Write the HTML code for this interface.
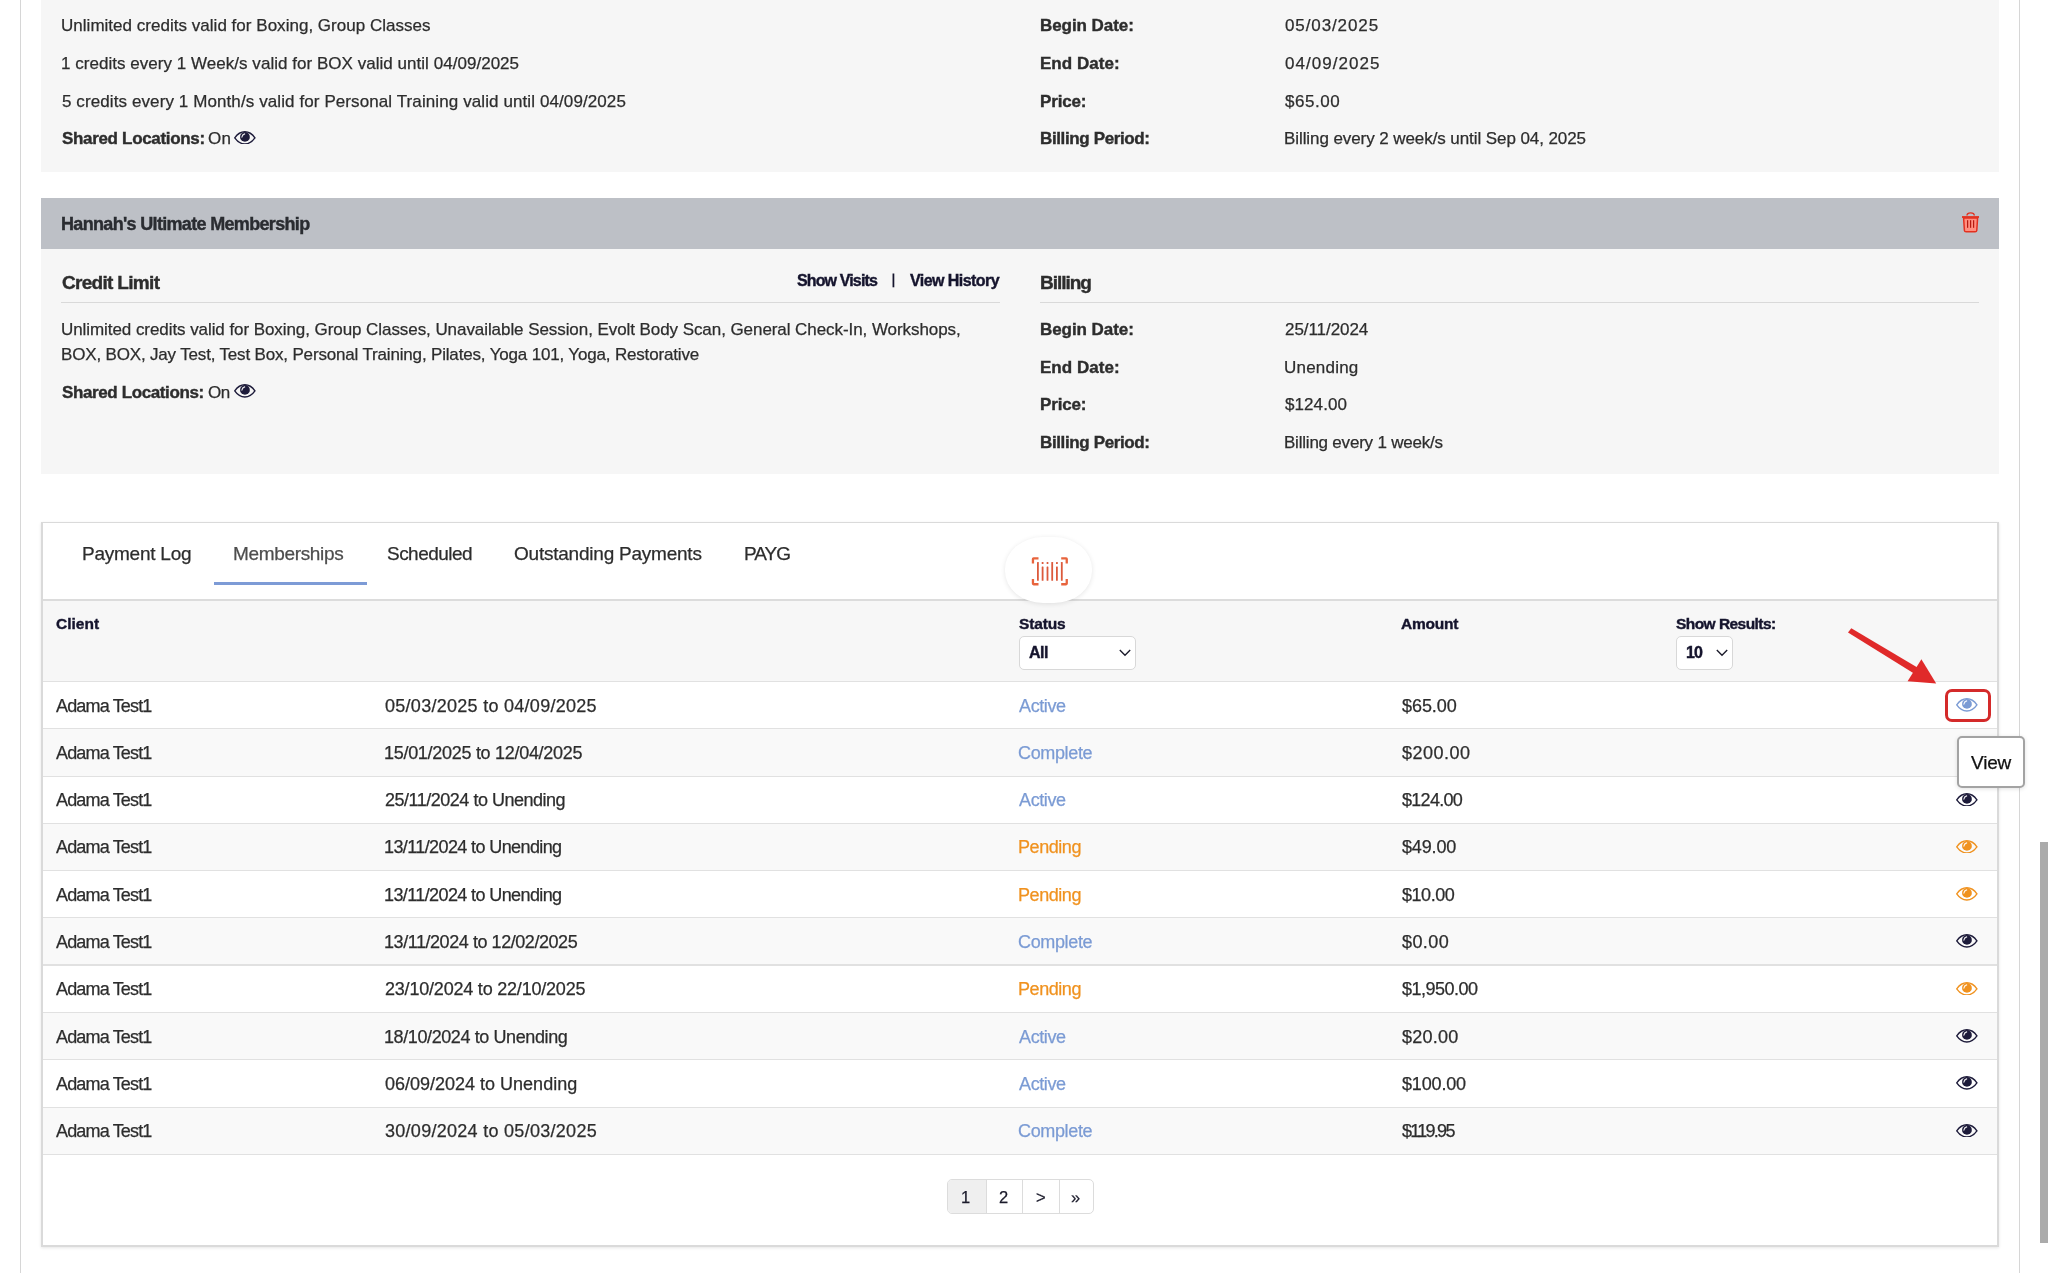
<!DOCTYPE html>
<html><head><meta charset="utf-8"><title>Memberships</title>
<style>
html,body{margin:0;padding:0;background:#fff;width:2048px;height:1273px;overflow:hidden;position:relative}
body{font-family:"Liberation Sans",sans-serif}
.ab{position:absolute;display:block}
.t{position:absolute;white-space:nowrap;font-family:"Liberation Sans",sans-serif;will-change:transform;-webkit-text-stroke:0.25px currentColor}
.b{-webkit-text-stroke:0.4px currentColor}
</style></head><body>

<div class='ab' style='left:20px;top:0;width:1px;height:1273px;background:#d6d6d6'></div>
<div class='ab' style='left:2019px;top:0;width:1px;height:1273px;background:#d6d6d6'></div>
<div class='ab' style='left:41px;top:0;width:1958px;height:172px;background:#f6f6f6'></div>
<div class='ab' style='left:41px;top:198px;width:1958px;height:51px;background:#bdc0c6'></div>
<div class='ab' style='left:41px;top:249px;width:1958px;height:225px;background:#f6f6f6'></div>
<div class='ab' style='left:61px;top:302px;width:939px;height:1.2px;background:#d9d9d9'></div>
<div class='ab' style='left:1040px;top:302px;width:939px;height:1.2px;background:#d9d9d9'></div>
<svg class='ab' style='left:891px;top:273px' width='5' height='15' viewBox='0 0 5 15'><rect x='1.55' y='0.5' width='1.75' height='13.8' fill='#15142d'/></svg>
<svg class='ab' style='left:234.2px;top:130.8px' width='21.7' height='13.7' viewBox='0 0 21.7 13.7'><path d='M0.75,6.85 C3.4,3.0 6.6,0.75 10.85,0.75 C15.1,0.75 18.3,3.0 20.95,6.85 C18.3,10.7 15.1,12.95 10.85,12.95 C6.6,12.95 3.4,10.7 0.75,6.85Z' fill='none' stroke='#1d1b3a' stroke-width='1.4'/><circle cx='10.95' cy='5.9' r='4.9' fill='#1d1b3a'/><path d='M7.9,6.1 Q8.2,3.7 10.7,2.9' fill='none' stroke='#fff' stroke-width='1.1' stroke-linecap='round' opacity='.9'/></svg>
<svg class='ab' style='left:234.2px;top:384.2px' width='21.7' height='13.7' viewBox='0 0 21.7 13.7'><path d='M0.75,6.85 C3.4,3.0 6.6,0.75 10.85,0.75 C15.1,0.75 18.3,3.0 20.95,6.85 C18.3,10.7 15.1,12.95 10.85,12.95 C6.6,12.95 3.4,10.7 0.75,6.85Z' fill='none' stroke='#1d1b3a' stroke-width='1.4'/><circle cx='10.95' cy='5.9' r='4.9' fill='#1d1b3a'/><path d='M7.9,6.1 Q8.2,3.7 10.7,2.9' fill='none' stroke='#fff' stroke-width='1.1' stroke-linecap='round' opacity='.9'/></svg>
<svg class='ab' style='left:1961px;top:211px' width='19' height='22' viewBox='0 0 19 22'>
<path d='M6,4.6 Q6,1.9 9.6,1.9 Q13.3,1.9 13.3,4.6' fill='none' stroke='#e3301f' stroke-width='1.4'/>
<rect x='1' y='5.1' width='17' height='1.8' fill='#e3301f'/>
<path d='M2.6,6.9 L3.4,19.3 Q3.6,20.8 5.1,20.8 H14.1 Q15.6,20.8 15.8,19.3 L16.6,6.9 Z' fill='#ff8f80' stroke='#e3301f' stroke-width='1.5'/>
<rect x='6' y='9.2' width='1.2' height='7.6' fill='#b51a10'/>
<rect x='9' y='9.2' width='1.2' height='7.6' fill='#b51a10'/>
<rect x='12' y='9.2' width='1.2' height='7.6' fill='#b51a10'/>
</svg>
<div class='ab' style='left:41px;top:522px;width:1958px;height:725px;box-sizing:border-box;border:2px solid #dadada;border-top-width:1.5px;background:#fff;box-shadow:0 1px 3px rgba(0,0,0,.10)'></div>
<div class='ab' style='left:214px;top:582px;width:152.5px;height:3px;background:#7d9bd6'></div>
<div class='ab' style='left:43px;top:599px;width:1954px;height:2px;background:#dcdcdc'></div>
<div class='ab' style='left:43px;top:601px;width:1954px;height:80px;background:#f7f7f7'></div>
<div class='ab' style='left:43px;top:728.6px;width:1954px;height:47.5px;background:#f9f9f9'></div>
<div class='ab' style='left:43px;top:823.1px;width:1954px;height:47.1px;background:#f9f9f9'></div>
<div class='ab' style='left:43px;top:917.5px;width:1954px;height:47.3px;background:#f9f9f9'></div>
<div class='ab' style='left:43px;top:1012.3px;width:1954px;height:47.3px;background:#f9f9f9'></div>
<div class='ab' style='left:43px;top:1107.1px;width:1954px;height:47.1px;background:#f9f9f9'></div>
<div class='ab' style='left:43px;top:680.6px;width:1954px;height:1.4px;background:#e1e1e1'></div>
<div class='ab' style='left:43px;top:728.0px;width:1954px;height:1.4px;background:#e1e1e1'></div>
<div class='ab' style='left:43px;top:775.5px;width:1954px;height:1.4px;background:#e1e1e1'></div>
<div class='ab' style='left:43px;top:822.5px;width:1954px;height:1.4px;background:#e1e1e1'></div>
<div class='ab' style='left:43px;top:869.6px;width:1954px;height:1.4px;background:#e1e1e1'></div>
<div class='ab' style='left:43px;top:916.9px;width:1954px;height:1.4px;background:#e1e1e1'></div>
<div class='ab' style='left:43px;top:964.2px;width:1954px;height:1.4px;background:#e1e1e1'></div>
<div class='ab' style='left:43px;top:1011.7px;width:1954px;height:1.4px;background:#e1e1e1'></div>
<div class='ab' style='left:43px;top:1059.0px;width:1954px;height:1.4px;background:#e1e1e1'></div>
<div class='ab' style='left:43px;top:1106.5px;width:1954px;height:1.4px;background:#e1e1e1'></div>
<div class='ab' style='left:43px;top:1153.6px;width:1954px;height:1.4px;background:#e1e1e1'></div>
<div class='ab' style='left:1005px;top:536.5px;width:87px;height:66px;border-radius:38px / 32px;background:#fff;box-shadow:0 1px 5px rgba(0,0,0,.10)'></div>
<svg class='ab' style='left:1031px;top:556px' width='38' height='31' viewBox='0 0 38 31'>
<g fill='none' stroke='#e8643d' stroke-width='2.3' stroke-linejoin='round'>
<path d='M7.5,2.35 H2.6 Q1.95,2.35 1.95,3 V7.5'/><path d='M30.2,2.35 H35.1 Q35.75,2.35 35.75,3 V7.5'/>
<path d='M1.95,23.1 V27.6 Q1.95,28.25 2.6,28.25 H7.5'/><path d='M35.75,23.1 V27.6 Q35.75,28.25 35.1,28.25 H30.2'/>
</g>
<g fill='#dc5a3c'><rect x='6.00' y='5.9' width='1.8' height='18.8' rx='0.5'/><rect x='10.70' y='10.6' width='1.8' height='14.1' rx='0.5'/><rect x='10.70' y='6.1' width='1.8' height='1.9' rx='0.5'/><rect x='15.60' y='10.6' width='1.8' height='14.1' rx='0.5'/><rect x='15.60' y='6.1' width='1.8' height='1.9' rx='0.5'/><rect x='20.30' y='5.9' width='1.8' height='18.8' rx='0.5'/><rect x='25.00' y='10.6' width='1.8' height='14.1' rx='0.5'/><rect x='25.00' y='6.1' width='1.8' height='1.9' rx='0.5'/><rect x='29.90' y='5.9' width='1.8' height='18.8' rx='0.5'/></g>
</svg>
<div class='ab' style='left:1019px;top:635.5px;width:117px;height:34px;box-sizing:border-box;border:1.3px solid #d8d8d8;border-radius:5px;background:#fff'></div>
<svg class='ab' style='left:1119px;top:649px' width='12' height='8' viewBox='0 0 12 8'><path d='M0.8,1 L6,6.2 L11.2,1' fill='none' stroke='#1a1a2a' stroke-width='1.35'/></svg>
<div class='ab' style='left:1676px;top:635.5px;width:57px;height:34px;box-sizing:border-box;border:1.3px solid #d8d8d8;border-radius:5px;background:#fff'></div>
<svg class='ab' style='left:1715.5px;top:649px' width='12' height='8' viewBox='0 0 12 8'><path d='M0.8,1 L6,6.2 L11.2,1' fill='none' stroke='#1a1a2a' stroke-width='1.35'/></svg>
<svg class='ab' style='left:1955.9px;top:697.9px' width='21.7' height='13.7' viewBox='0 0 21.7 13.7'><path d='M0.75,6.85 C3.4,3.0 6.6,0.75 10.85,0.75 C15.1,0.75 18.3,3.0 20.95,6.85 C18.3,10.7 15.1,12.95 10.85,12.95 C6.6,12.95 3.4,10.7 0.75,6.85Z' fill='none' stroke='#7b9bd4' stroke-width='1.4'/><circle cx='10.95' cy='5.9' r='4.9' fill='#7b9bd4'/><path d='M7.9,6.1 Q8.2,3.7 10.7,2.9' fill='none' stroke='#fff' stroke-width='1.1' stroke-linecap='round' opacity='.9'/></svg>
<svg class='ab' style='left:1955.9px;top:792.6px' width='21.7' height='13.7' viewBox='0 0 21.7 13.7'><path d='M0.75,6.85 C3.4,3.0 6.6,0.75 10.85,0.75 C15.1,0.75 18.3,3.0 20.95,6.85 C18.3,10.7 15.1,12.95 10.85,12.95 C6.6,12.95 3.4,10.7 0.75,6.85Z' fill='none' stroke='#1d1b3a' stroke-width='1.4'/><circle cx='10.95' cy='5.9' r='4.9' fill='#1d1b3a'/><path d='M7.9,6.1 Q8.2,3.7 10.7,2.9' fill='none' stroke='#fff' stroke-width='1.1' stroke-linecap='round' opacity='.9'/></svg>
<svg class='ab' style='left:1955.9px;top:839.7px' width='21.7' height='13.7' viewBox='0 0 21.7 13.7'><path d='M0.75,6.85 C3.4,3.0 6.6,0.75 10.85,0.75 C15.1,0.75 18.3,3.0 20.95,6.85 C18.3,10.7 15.1,12.95 10.85,12.95 C6.6,12.95 3.4,10.7 0.75,6.85Z' fill='none' stroke='#f0921f' stroke-width='1.4'/><circle cx='10.95' cy='5.9' r='4.9' fill='#f0921f'/><path d='M7.9,6.1 Q8.2,3.7 10.7,2.9' fill='none' stroke='#fff' stroke-width='1.1' stroke-linecap='round' opacity='.9'/></svg>
<svg class='ab' style='left:1955.9px;top:886.9px' width='21.7' height='13.7' viewBox='0 0 21.7 13.7'><path d='M0.75,6.85 C3.4,3.0 6.6,0.75 10.85,0.75 C15.1,0.75 18.3,3.0 20.95,6.85 C18.3,10.7 15.1,12.95 10.85,12.95 C6.6,12.95 3.4,10.7 0.75,6.85Z' fill='none' stroke='#f0921f' stroke-width='1.4'/><circle cx='10.95' cy='5.9' r='4.9' fill='#f0921f'/><path d='M7.9,6.1 Q8.2,3.7 10.7,2.9' fill='none' stroke='#fff' stroke-width='1.1' stroke-linecap='round' opacity='.9'/></svg>
<svg class='ab' style='left:1955.9px;top:934.1px' width='21.7' height='13.7' viewBox='0 0 21.7 13.7'><path d='M0.75,6.85 C3.4,3.0 6.6,0.75 10.85,0.75 C15.1,0.75 18.3,3.0 20.95,6.85 C18.3,10.7 15.1,12.95 10.85,12.95 C6.6,12.95 3.4,10.7 0.75,6.85Z' fill='none' stroke='#1d1b3a' stroke-width='1.4'/><circle cx='10.95' cy='5.9' r='4.9' fill='#1d1b3a'/><path d='M7.9,6.1 Q8.2,3.7 10.7,2.9' fill='none' stroke='#fff' stroke-width='1.1' stroke-linecap='round' opacity='.9'/></svg>
<svg class='ab' style='left:1955.9px;top:981.5px' width='21.7' height='13.7' viewBox='0 0 21.7 13.7'><path d='M0.75,6.85 C3.4,3.0 6.6,0.75 10.85,0.75 C15.1,0.75 18.3,3.0 20.95,6.85 C18.3,10.7 15.1,12.95 10.85,12.95 C6.6,12.95 3.4,10.7 0.75,6.85Z' fill='none' stroke='#f0921f' stroke-width='1.4'/><circle cx='10.95' cy='5.9' r='4.9' fill='#f0921f'/><path d='M7.9,6.1 Q8.2,3.7 10.7,2.9' fill='none' stroke='#fff' stroke-width='1.1' stroke-linecap='round' opacity='.9'/></svg>
<svg class='ab' style='left:1955.9px;top:1028.9px' width='21.7' height='13.7' viewBox='0 0 21.7 13.7'><path d='M0.75,6.85 C3.4,3.0 6.6,0.75 10.85,0.75 C15.1,0.75 18.3,3.0 20.95,6.85 C18.3,10.7 15.1,12.95 10.85,12.95 C6.6,12.95 3.4,10.7 0.75,6.85Z' fill='none' stroke='#1d1b3a' stroke-width='1.4'/><circle cx='10.95' cy='5.9' r='4.9' fill='#1d1b3a'/><path d='M7.9,6.1 Q8.2,3.7 10.7,2.9' fill='none' stroke='#fff' stroke-width='1.1' stroke-linecap='round' opacity='.9'/></svg>
<svg class='ab' style='left:1955.9px;top:1076.3px' width='21.7' height='13.7' viewBox='0 0 21.7 13.7'><path d='M0.75,6.85 C3.4,3.0 6.6,0.75 10.85,0.75 C15.1,0.75 18.3,3.0 20.95,6.85 C18.3,10.7 15.1,12.95 10.85,12.95 C6.6,12.95 3.4,10.7 0.75,6.85Z' fill='none' stroke='#1d1b3a' stroke-width='1.4'/><circle cx='10.95' cy='5.9' r='4.9' fill='#1d1b3a'/><path d='M7.9,6.1 Q8.2,3.7 10.7,2.9' fill='none' stroke='#fff' stroke-width='1.1' stroke-linecap='round' opacity='.9'/></svg>
<svg class='ab' style='left:1955.9px;top:1123.7px' width='21.7' height='13.7' viewBox='0 0 21.7 13.7'><path d='M0.75,6.85 C3.4,3.0 6.6,0.75 10.85,0.75 C15.1,0.75 18.3,3.0 20.95,6.85 C18.3,10.7 15.1,12.95 10.85,12.95 C6.6,12.95 3.4,10.7 0.75,6.85Z' fill='none' stroke='#1d1b3a' stroke-width='1.4'/><circle cx='10.95' cy='5.9' r='4.9' fill='#1d1b3a'/><path d='M7.9,6.1 Q8.2,3.7 10.7,2.9' fill='none' stroke='#fff' stroke-width='1.1' stroke-linecap='round' opacity='.9'/></svg>
<div class='ab' style='left:1945px;top:688.5px;width:46px;height:33.5px;box-sizing:border-box;border:3px solid #d42a2a;border-radius:7px'></div>
<svg class='ab' style='left:1840px;top:620px' width='110' height='80' viewBox='0 0 110 80'>
<polygon points='11.3,8.2 8.0,12.6 74.0,53.5 77.4,47.6' fill='#e02a2a'/>
<polygon points='67.6,61.3 81.4,39.3 96.2,63.5' fill='#e02a2a'/>
</svg>
<div class='ab' style='left:1956.5px;top:735.5px;width:68px;height:52px;box-sizing:border-box;border:2px solid #a3a3a3;border-radius:5px;background:#fff;box-shadow:0 1px 4px rgba(0,0,0,.12)'></div>
<div class='ab' style='left:946.5px;top:1179.3px;width:147.5px;height:35px;box-sizing:border-box;border:1.3px solid #dcdcdc;border-radius:5px;background:#fff;overflow:hidden'><div class='ab' style='left:0;top:0;width:38.5px;height:33px;background:#efefef'></div><div class='ab' style='left:38.3px;top:0;width:1.3px;height:33px;background:#dcdcdc'></div><div class='ab' style='left:74.5px;top:0;width:1.3px;height:33px;background:#dcdcdc'></div><div class='ab' style='left:111px;top:0;width:1.3px;height:33px;background:#dcdcdc'></div></div>
<div class='ab' style='left:2040px;top:842px;width:8px;height:401px;background:#ababab'></div>
<div class='t' style='left:60.50px;top:16.55px;font-size:17px;line-height:17px;color:#2d2d2d;letter-spacing:0.023px'>Unlimited credits valid for Boxing, Group Classes</div>
<div class='t' style='left:60.50px;top:54.55px;font-size:17px;line-height:17px;color:#2d2d2d;letter-spacing:0.033px'>1 credits every 1 Week/s valid for BOX valid until 04/09/2025</div>
<div class='t' style='left:61.50px;top:92.55px;font-size:17px;line-height:17px;color:#2d2d2d;letter-spacing:0.097px'>5 credits every 1 Month/s valid for Personal Training valid until 04/09/2025</div>
<div class='t b' style='left:61.50px;top:130.05px;font-size:17px;line-height:17px;color:#2d2d2d;font-weight:700;letter-spacing:-0.325px'>Shared Locations:</div>
<div class='t' style='left:207.50px;top:130.05px;font-size:17px;line-height:17px;color:#2d2d2d;letter-spacing:0.200px'>On</div>
<div class='t b' style='left:1039.60px;top:16.55px;font-size:17px;line-height:17px;color:#2d2d2d;font-weight:700;letter-spacing:-0.060px'>Begin Date:</div>
<div class='t b' style='left:1039.60px;top:54.55px;font-size:17px;line-height:17px;color:#2d2d2d;font-weight:700;letter-spacing:0.025px'>End Date:</div>
<div class='t b' style='left:1039.60px;top:92.55px;font-size:17px;line-height:17px;color:#2d2d2d;font-weight:700;letter-spacing:-0.160px'>Price:</div>
<div class='t b' style='left:1039.60px;top:130.05px;font-size:17px;line-height:17px;color:#2d2d2d;font-weight:700;letter-spacing:-0.371px'>Billing Period:</div>
<div class='t' style='left:1285.00px;top:16.55px;font-size:17px;line-height:17px;color:#2d2d2d;letter-spacing:0.889px'>05/03/2025</div>
<div class='t' style='left:1285.00px;top:54.55px;font-size:17px;line-height:17px;color:#2d2d2d;letter-spacing:1.044px'>04/09/2025</div>
<div class='t' style='left:1285.00px;top:92.55px;font-size:17px;line-height:17px;color:#2d2d2d;letter-spacing:0.540px'>$65.00</div>
<div class='t' style='left:1284.00px;top:130.05px;font-size:17px;line-height:17px;color:#2d2d2d;letter-spacing:-0.080px'>Billing every 2 week/s until Sep 04, 2025</div>
<div class='t b' style='left:61.00px;top:214.70px;font-size:18px;line-height:18px;color:#2a2c31;font-weight:700;letter-spacing:-0.674px'>Hannah&#x27;s Ultimate Membership</div>
<div class='t b' style='left:61.70px;top:273.05px;font-size:19px;line-height:19px;color:#2d2d2d;font-weight:700;letter-spacing:-0.691px'>Credit Limit</div>
<div class='t b' style='left:797.40px;top:273.00px;font-size:16px;line-height:16px;color:#15142d;font-weight:700;letter-spacing:-0.870px'>Show Visits</div>
<div class='t b' style='left:909.70px;top:273.00px;font-size:16px;line-height:16px;color:#15142d;font-weight:700;letter-spacing:-0.555px'>View History</div>
<div class='t' style='left:60.50px;top:321.15px;font-size:17px;line-height:17px;color:#2d2d2d;letter-spacing:-0.069px'>Unlimited credits valid for Boxing, Group Classes, Unavailable Session, Evolt Body Scan, General Check-In, Workshops,</div>
<div class='t' style='left:60.50px;top:345.75px;font-size:17px;line-height:17px;color:#2d2d2d;letter-spacing:-0.169px'>BOX, BOX, Jay Test, Test Box, Personal Training, Pilates, Yoga 101, Yoga, Restorative</div>
<div class='t b' style='left:61.50px;top:383.55px;font-size:17px;line-height:17px;color:#2d2d2d;font-weight:700;letter-spacing:-0.387px'>Shared Locations:</div>
<div class='t' style='left:207.90px;top:383.55px;font-size:17px;line-height:17px;color:#2d2d2d;letter-spacing:-0.500px'>On</div>
<div class='t b' style='left:1039.50px;top:273.05px;font-size:19px;line-height:19px;color:#2d2d2d;font-weight:700;letter-spacing:-1.017px'>Billing</div>
<div class='t b' style='left:1039.60px;top:321.35px;font-size:17px;line-height:17px;color:#2d2d2d;font-weight:700;letter-spacing:-0.060px'>Begin Date:</div>
<div class='t b' style='left:1039.60px;top:358.85px;font-size:17px;line-height:17px;color:#2d2d2d;font-weight:700;letter-spacing:0.025px'>End Date:</div>
<div class='t b' style='left:1039.60px;top:396.45px;font-size:17px;line-height:17px;color:#2d2d2d;font-weight:700;letter-spacing:-0.160px'>Price:</div>
<div class='t b' style='left:1039.60px;top:434.05px;font-size:17px;line-height:17px;color:#2d2d2d;font-weight:700;letter-spacing:-0.371px'>Billing Period:</div>
<div class='t' style='left:1284.90px;top:321.35px;font-size:17px;line-height:17px;color:#2d2d2d;letter-spacing:-0.056px'>25/11/2024</div>
<div class='t' style='left:1283.90px;top:358.85px;font-size:17px;line-height:17px;color:#2d2d2d;letter-spacing:0.214px'>Unending</div>
<div class='t' style='left:1284.90px;top:396.45px;font-size:17px;line-height:17px;color:#2d2d2d;letter-spacing:0.083px'>$124.00</div>
<div class='t' style='left:1283.90px;top:434.05px;font-size:17px;line-height:17px;color:#2d2d2d;letter-spacing:-0.214px'>Billing every 1 week/s</div>
<div class='t' style='left:82.00px;top:544.35px;font-size:19px;line-height:19px;color:#2d2d2d;letter-spacing:-0.240px'>Payment Log</div>
<div class='t' style='left:233.30px;top:544.35px;font-size:19px;line-height:19px;color:#4d4d4d;letter-spacing:-0.330px'>Memberships</div>
<div class='t' style='left:386.50px;top:544.35px;font-size:19px;line-height:19px;color:#2d2d2d;letter-spacing:-0.538px'>Scheduled</div>
<div class='t' style='left:513.90px;top:544.35px;font-size:19px;line-height:19px;color:#2d2d2d;letter-spacing:-0.226px'>Outstanding Payments</div>
<div class='t' style='left:744.30px;top:544.35px;font-size:19px;line-height:19px;color:#2d2d2d;letter-spacing:-0.967px'>PAYG</div>
<div class='t b' style='left:55.80px;top:616.12px;font-size:15.5px;line-height:15.5px;color:#15142d;font-weight:700'>Client</div>
<div class='t b' style='left:1019.00px;top:616.12px;font-size:15.5px;line-height:15.5px;color:#15142d;font-weight:700;letter-spacing:-0.160px'>Status</div>
<div class='t b' style='left:1401.10px;top:616.33px;font-size:15.5px;line-height:15.5px;color:#15142d;font-weight:700;letter-spacing:-0.220px'>Amount</div>
<div class='t b' style='left:1676.00px;top:616.33px;font-size:15.5px;line-height:15.5px;color:#15142d;font-weight:700;letter-spacing:-0.550px'>Show Results:</div>
<div class='t b' style='left:1029.30px;top:645.00px;font-size:16px;line-height:16px;color:#15142d;font-weight:700;letter-spacing:-0.500px'>All</div>
<div class='t b' style='left:1685.60px;top:645.00px;font-size:16px;line-height:16px;color:#15142d;font-weight:700;letter-spacing:-1.000px'>10</div>
<div class='t' style='left:56.30px;top:696.50px;font-size:18px;line-height:18px;color:#2d2d2d;letter-spacing:-0.840px'>Adama Test1</div>
<div class='t' style='left:384.70px;top:696.50px;font-size:18px;line-height:18px;color:#2d2d2d;letter-spacing:0.278px'>05/03/2025 to 04/09/2025</div>
<div class='t' style='left:1018.90px;top:696.50px;font-size:18px;line-height:18px;color:#7b9bd4;letter-spacing:-0.380px'>Active</div>
<div class='t' style='left:1401.60px;top:696.50px;font-size:18px;line-height:18px;color:#2d2d2d;letter-spacing:-0.060px'>$65.00</div>
<div class='t' style='left:56.30px;top:743.80px;font-size:18px;line-height:18px;color:#2d2d2d;letter-spacing:-0.840px'>Adama Test1</div>
<div class='t' style='left:383.70px;top:743.80px;font-size:18px;line-height:18px;color:#2d2d2d;letter-spacing:-0.291px'>15/01/2025 to 12/04/2025</div>
<div class='t' style='left:1017.90px;top:743.80px;font-size:18px;line-height:18px;color:#7b9bd4;letter-spacing:-0.357px'>Complete</div>
<div class='t' style='left:1401.60px;top:743.80px;font-size:18px;line-height:18px;color:#2d2d2d;letter-spacing:0.483px'>$200.00</div>
<div class='t' style='left:56.30px;top:791.10px;font-size:18px;line-height:18px;color:#2d2d2d;letter-spacing:-0.840px'>Adama Test1</div>
<div class='t' style='left:384.70px;top:791.10px;font-size:18px;line-height:18px;color:#2d2d2d;letter-spacing:-0.486px'>25/11/2024 to Unending</div>
<div class='t' style='left:1018.90px;top:791.10px;font-size:18px;line-height:18px;color:#7b9bd4;letter-spacing:-0.380px'>Active</div>
<div class='t' style='left:1401.60px;top:791.10px;font-size:18px;line-height:18px;color:#2d2d2d;letter-spacing:-0.717px'>$124.00</div>
<div class='t' style='left:56.30px;top:838.40px;font-size:18px;line-height:18px;color:#2d2d2d;letter-spacing:-0.840px'>Adama Test1</div>
<div class='t' style='left:383.70px;top:838.40px;font-size:18px;line-height:18px;color:#2d2d2d;letter-spacing:-0.605px'>13/11/2024 to Unending</div>
<div class='t' style='left:1017.90px;top:838.40px;font-size:18px;line-height:18px;color:#f0921f;letter-spacing:-0.433px'>Pending</div>
<div class='t' style='left:1401.60px;top:838.40px;font-size:18px;line-height:18px;color:#2d2d2d;letter-spacing:-0.140px'>$49.00</div>
<div class='t' style='left:56.30px;top:885.70px;font-size:18px;line-height:18px;color:#2d2d2d;letter-spacing:-0.840px'>Adama Test1</div>
<div class='t' style='left:383.70px;top:885.70px;font-size:18px;line-height:18px;color:#2d2d2d;letter-spacing:-0.605px'>13/11/2024 to Unending</div>
<div class='t' style='left:1017.90px;top:885.70px;font-size:18px;line-height:18px;color:#f0921f;letter-spacing:-0.433px'>Pending</div>
<div class='t' style='left:1401.60px;top:885.70px;font-size:18px;line-height:18px;color:#2d2d2d;letter-spacing:-0.460px'>$10.00</div>
<div class='t' style='left:56.30px;top:933.00px;font-size:18px;line-height:18px;color:#2d2d2d;letter-spacing:-0.840px'>Adama Test1</div>
<div class='t' style='left:383.70px;top:933.00px;font-size:18px;line-height:18px;color:#2d2d2d;letter-spacing:-0.443px'>13/11/2024 to 12/02/2025</div>
<div class='t' style='left:1017.90px;top:933.00px;font-size:18px;line-height:18px;color:#7b9bd4;letter-spacing:-0.357px'>Complete</div>
<div class='t' style='left:1401.60px;top:933.00px;font-size:18px;line-height:18px;color:#2d2d2d;letter-spacing:0.425px'>$0.00</div>
<div class='t' style='left:56.30px;top:980.30px;font-size:18px;line-height:18px;color:#2d2d2d;letter-spacing:-0.840px'>Adama Test1</div>
<div class='t' style='left:384.70px;top:980.30px;font-size:18px;line-height:18px;color:#2d2d2d;letter-spacing:-0.204px'>23/10/2024 to 22/10/2025</div>
<div class='t' style='left:1017.90px;top:980.30px;font-size:18px;line-height:18px;color:#f0921f;letter-spacing:-0.433px'>Pending</div>
<div class='t' style='left:1401.60px;top:980.30px;font-size:18px;line-height:18px;color:#2d2d2d;letter-spacing:-0.500px'>$1,950.00</div>
<div class='t' style='left:56.30px;top:1027.60px;font-size:18px;line-height:18px;color:#2d2d2d;letter-spacing:-0.840px'>Adama Test1</div>
<div class='t' style='left:383.70px;top:1027.60px;font-size:18px;line-height:18px;color:#2d2d2d;letter-spacing:-0.400px'>18/10/2024 to Unending</div>
<div class='t' style='left:1018.90px;top:1027.60px;font-size:18px;line-height:18px;color:#7b9bd4;letter-spacing:-0.380px'>Active</div>
<div class='t' style='left:1401.60px;top:1027.60px;font-size:18px;line-height:18px;color:#2d2d2d;letter-spacing:0.240px'>$20.00</div>
<div class='t' style='left:56.30px;top:1074.90px;font-size:18px;line-height:18px;color:#2d2d2d;letter-spacing:-0.840px'>Adama Test1</div>
<div class='t' style='left:384.70px;top:1074.90px;font-size:18px;line-height:18px;color:#2d2d2d'>06/09/2024 to Unending</div>
<div class='t' style='left:1018.90px;top:1074.90px;font-size:18px;line-height:18px;color:#7b9bd4;letter-spacing:-0.380px'>Active</div>
<div class='t' style='left:1401.60px;top:1074.90px;font-size:18px;line-height:18px;color:#2d2d2d;letter-spacing:-0.167px'>$100.00</div>
<div class='t' style='left:56.30px;top:1122.20px;font-size:18px;line-height:18px;color:#2d2d2d;letter-spacing:-0.840px'>Adama Test1</div>
<div class='t' style='left:384.70px;top:1122.20px;font-size:18px;line-height:18px;color:#2d2d2d;letter-spacing:0.283px'>30/09/2024 to 05/03/2025</div>
<div class='t' style='left:1017.90px;top:1122.20px;font-size:18px;line-height:18px;color:#7b9bd4;letter-spacing:-0.357px'>Complete</div>
<div class='t' style='left:1401.60px;top:1122.20px;font-size:18px;line-height:18px;color:#2d2d2d;letter-spacing:-1.717px'>$119.95</div>
<div class='t' style='left:1970.50px;top:752.65px;font-size:19px;line-height:19px;color:#111;letter-spacing:-0.200px'>View</div>
<div class='t' style='left:961.00px;top:1189.47px;font-size:16.5px;line-height:16.5px;color:#1a1a2a'>1</div>
<div class='t' style='left:998.90px;top:1189.47px;font-size:16.5px;line-height:16.5px;color:#1a1a2a'>2</div>
<div class='t' style='left:1035.50px;top:1189.47px;font-size:16.5px;line-height:16.5px;color:#1a1a2a'>&gt;</div>
<div class='t' style='left:1071.40px;top:1189.47px;font-size:16.5px;line-height:16.5px;color:#1a1a2a'>»</div>
</body></html>
